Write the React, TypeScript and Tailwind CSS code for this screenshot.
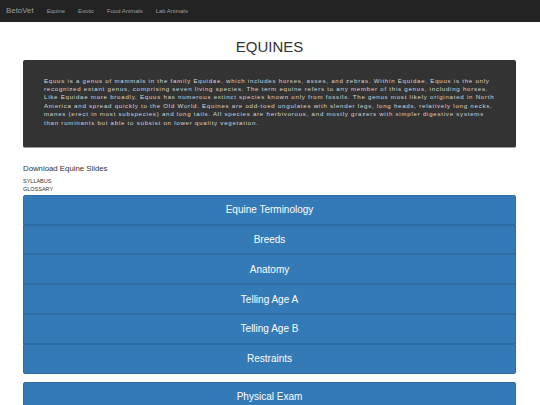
const NAV_LINKS = ['Equine', 'Exotic', 'Food Animals', 'Lab Animals']

const TOPICS = ['Equine Terminology', 'Breeds', 'Anatomy', 'Telling Age A', 'Telling Age B', 'Restraints']

const INTRO =
  'Equus is a genus of mammals in the family Equidae, which includes horses, asses, and zebras. Within Equidae, Equus is the only recognized extant genus, comprising seven living species. The term equine refers to any member of this genus, including horses. Like Equidae more broadly, Equus has numerous extinct species known only from fossils. The genus most likely originated in North America and spread quickly to the Old World. Equines are odd-toed ungulates with slender legs, long heads, relatively long necks, manes (erect in most subspecies) and long tails. All species are herbivorous, and mostly grazers with simpler digestive systems than ruminants but able to subsist on lower quality vegetation.'

function TopicButton({ label, first, last }: { label: string; first?: boolean; last?: boolean }) {
  return (
    <button
      type="button"
      className={`flex h-[29.8px] w-full items-center justify-center border border-[#2e6da4] bg-[#337ab7] text-[10px] text-white ${
        first ? 'rounded-t-[2px]' : ''
      } ${last ? 'rounded-b-[2px]' : ''}`}
    >
      {label}
    </button>
  )
}

export default function App() {
  return (
    <div className="min-h-[405px] bg-white font-['Liberation_Sans',Arial,sans-serif] text-[#333] antialiased">
      <nav className="flex h-[22px] items-center bg-[#222] px-[6px] text-[#9d9d9d]">
        <span className="text-[7.9px]">BetoVet</span>
        <ul className="ml-[6.5px] flex">
          {NAV_LINKS.map((l) => (
            <li key={l} className="px-[6.5px] text-[5.9px]">
              {l}
            </li>
          ))}
        </ul>
      </nav>

      <main className="pl-[23px] pr-[24px]">
        <h1 className="mt-[15px] text-center text-[15px] leading-[20px] text-[#333]">EQUINES</h1>

        <section className="mt-[3px] rounded-[2px] border-b border-[#999] bg-[#333] pl-[21px] pr-[20px] pt-[16.5px] pb-[20px]">
          <p className="text-[6.1px] leading-[8.47px] tracking-[0.76px] text-[#d6d6d6]">{INTRO}</p>
        </section>

        <p className="mt-[16px] text-[7.8px] leading-[10px]">Download Equine Slides</p>
        <div className="mt-[2.5px] text-[5.5px] leading-[8.5px]">
          <div>SYLLABUS</div>
          <div>GLOSSARY</div>
        </div>

        <div className="mt-[1px] flex flex-col">
          {TOPICS.map((t, i) => (
            <TopicButton key={t} label={t} first={i === 0} last={i === TOPICS.length - 1} />
          ))}
        </div>

        <div className="mt-[8px]">
          <TopicButton label="Physical Exam" first last />
        </div>
      </main>
    </div>
  )
}
